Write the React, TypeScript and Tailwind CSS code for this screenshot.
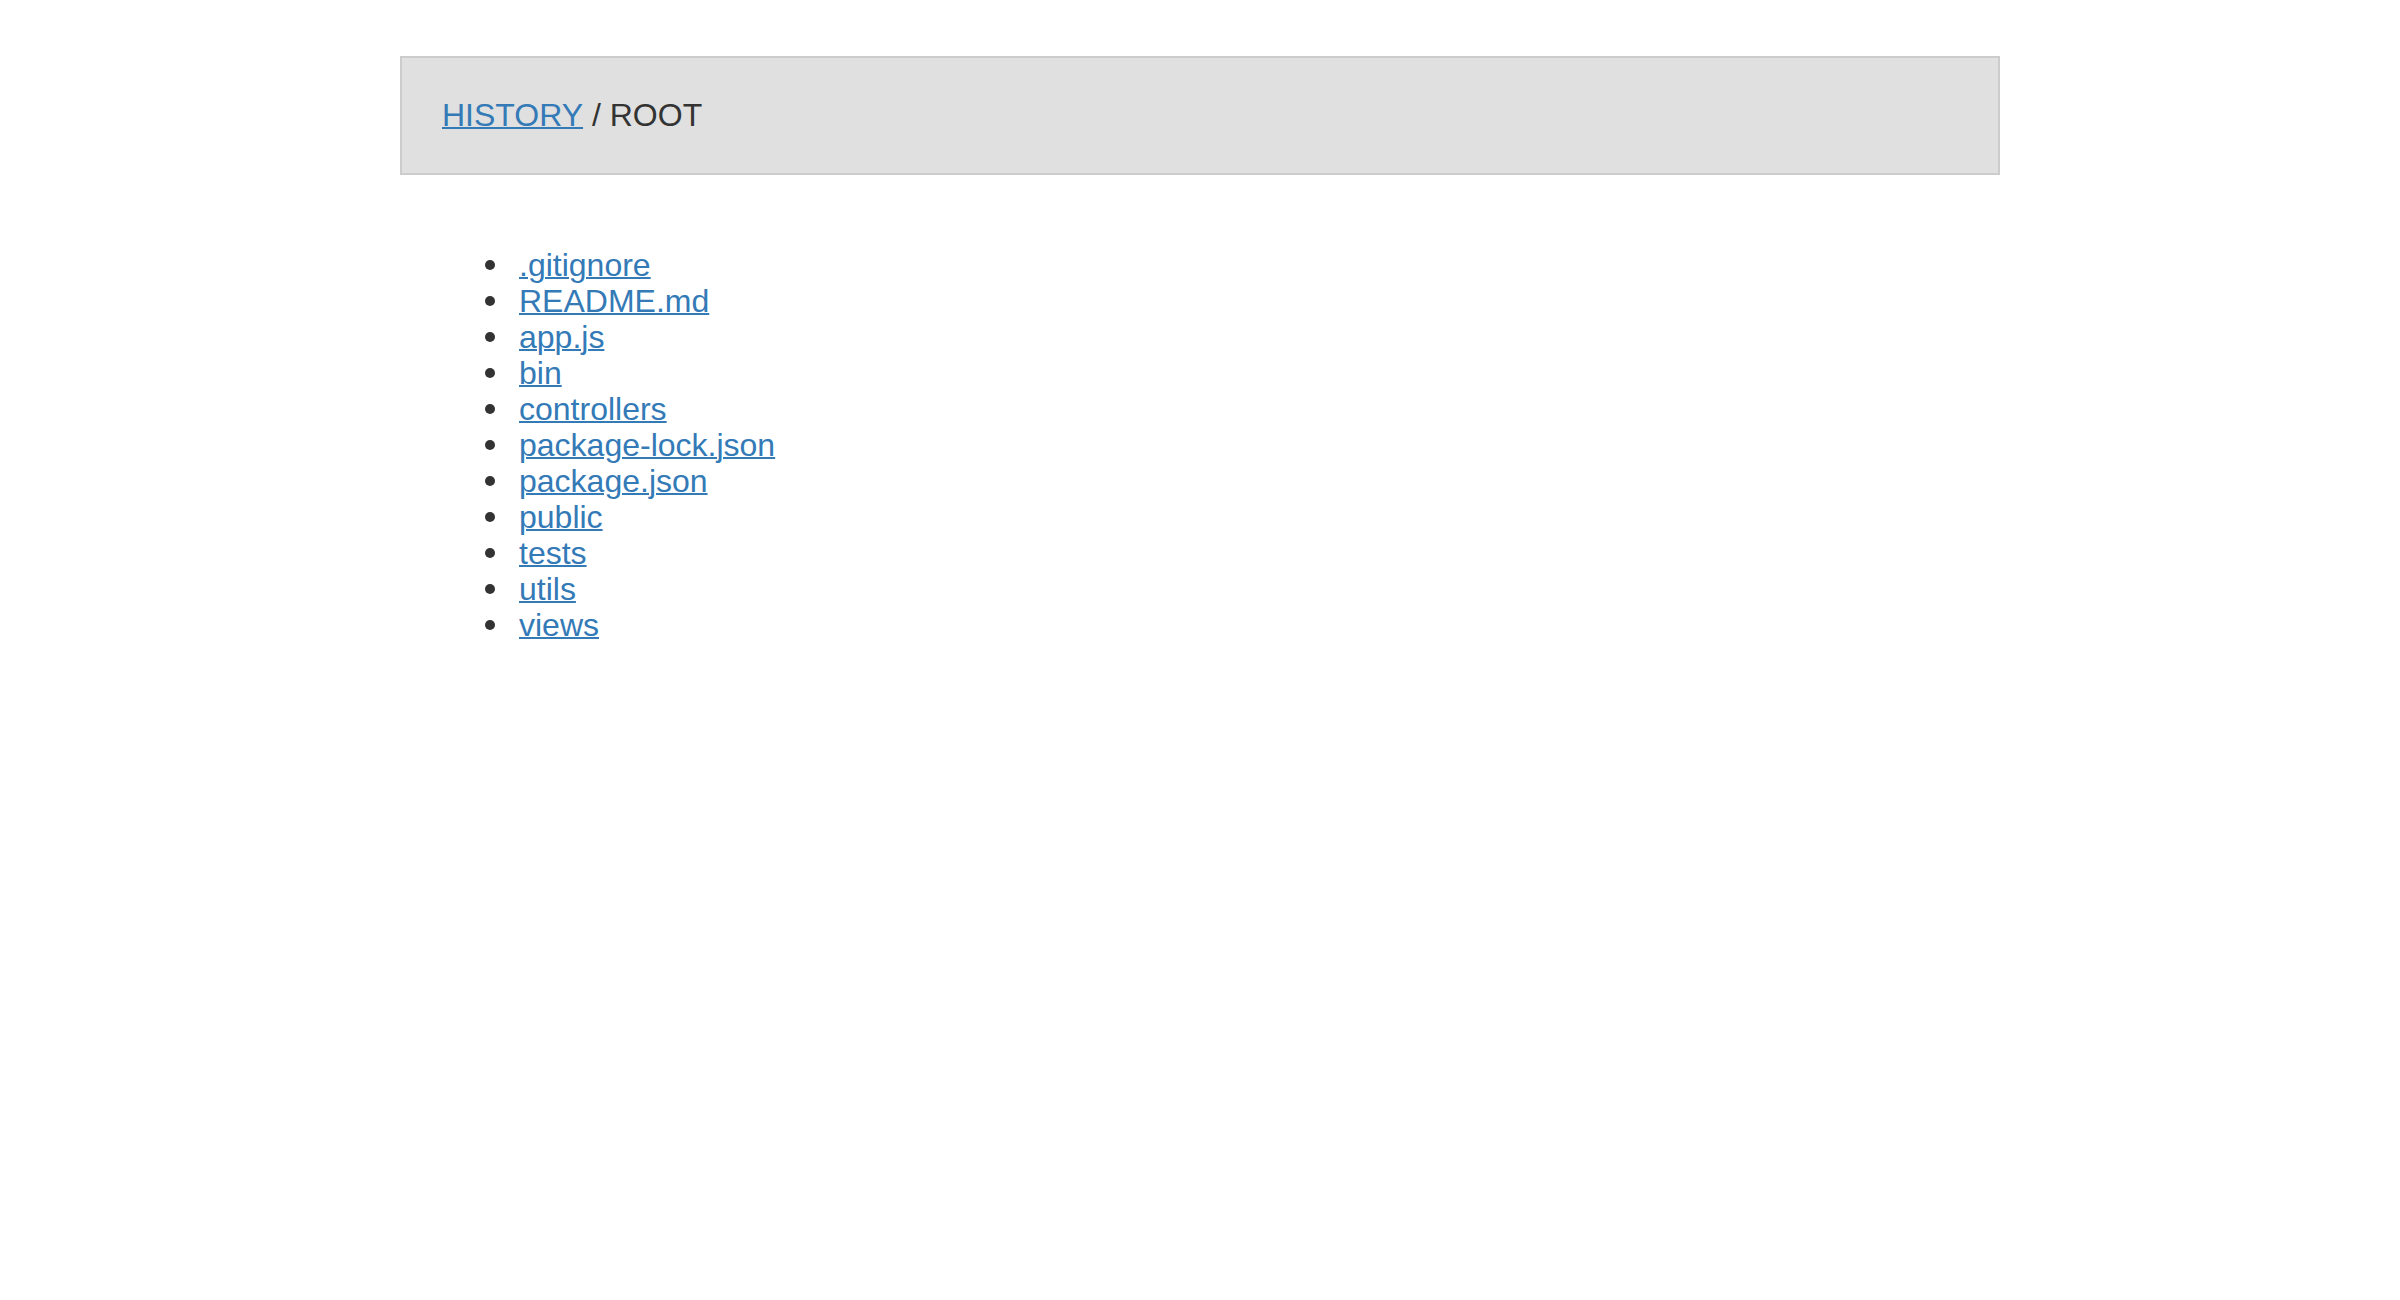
const files = [
  ".gitignore",
  "README.md",
  "app.js",
  "bin",
  "controllers",
  "package-lock.json",
  "package.json",
  "public",
  "tests",
  "utils",
  "views",
];

export default function App() {
  return (
    <div className="min-h-screen bg-white text-[#333] font-['Liberation_Sans',Arial,sans-serif]">
      <div className="mx-auto w-[1600px] pt-[56px]">
        <div className="flex h-[119px] items-center border-2 border-[#ccc] bg-[#e0e0e0] px-[40px] pb-[2px] text-[32px]">
          <a href="#" className="text-[#337ab7] underline decoration-2">
            HISTORY
          </a>
          <span className="whitespace-pre"> / ROOT</span>
        </div>

        <ul className="mt-[72px] pl-[119px] text-[32px] leading-[36px]">
          {files.map((f) => (
            <li key={f} className="flex items-center">
              <span className="-ml-[34px] mr-[24px] h-[10px] w-[10px] shrink-0 rounded-full bg-[#333]" />
              <a href="#" className="text-[#337ab7] underline decoration-2">
                {f}
              </a>
            </li>
          ))}
        </ul>
      </div>
    </div>
  );
}
